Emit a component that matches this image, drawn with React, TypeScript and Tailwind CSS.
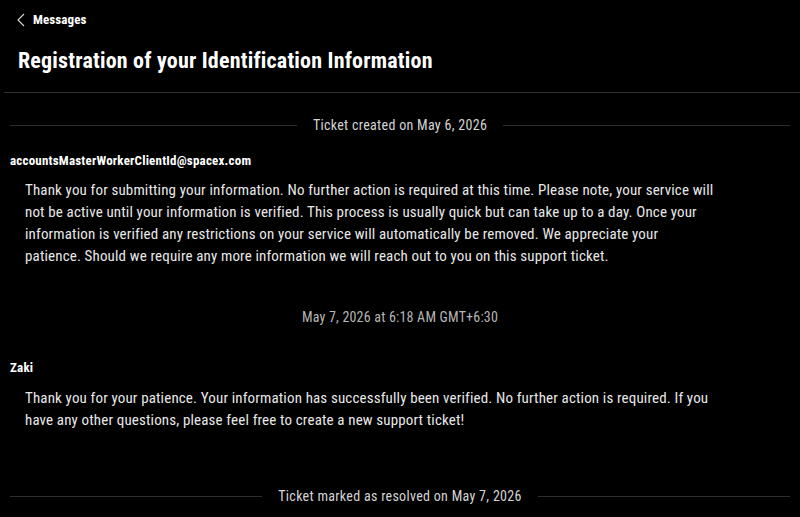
const Divider = ({ label }: { label: string }) => (
  <div className="flex items-center gap-4 px-[10px]">
    <div className="h-px flex-1 bg-[#2e2e2e]" />
    <span className="text-[14px] tracking-[0.3px] text-[#d4d4d4]">{label}</span>
    <div className="h-px flex-1 bg-[#2e2e2e]" />
  </div>
);

const Message = ({ sender, text }: { sender: string; text: string }) => (
  <div className="flex flex-col">
    <div className="px-[10px] text-[13px] font-bold tracking-[0.2px] text-white">{sender}</div>
    <p className="mt-[9px] max-w-[715px] pl-[25px] text-[15px] leading-[22px] tracking-[0.15px] text-[#e8e8e8]">
      {text}
    </p>
  </div>
);

const App = () => {
  return (
    <div
      className="min-h-[517px] w-full bg-black text-white"
      style={{ fontFamily: '"Liberation Sans Narrow", "Roboto Condensed", "Liberation Sans", sans-serif' }}
    >
      <div className="px-[18px] pt-[10px]">
        <div className="flex items-center gap-[8px]">
          <svg width="8" height="14" viewBox="0 0 8 14" fill="none" className="-ml-[1px]">
            <path d="M7 1L1 7l6 6" stroke="#d0d0d0" strokeWidth="1.2" />
          </svg>
          <span className="text-[13px] font-bold tracking-[0.1px]">Messages</span>
        </div>
        <h1 className="mt-[17px] text-[22px] font-bold leading-[28px] tracking-[0.2px]">
          Registration of your Identification Information
        </h1>
      </div>
      <div className="mt-[17px] ml-[4px] h-px bg-[#2e2e2e]" />

      <div className="mt-[22px]">
        <Divider label="Ticket created on May 6, 2026" />
      </div>

      <div className="mt-[15px]">
        <Message
          sender="accountsMasterWorkerClientId@spacex.com"
          text="Thank you for submitting your information. No further action is required at this time. Please note, your service will not be active until your information is verified. This process is usually quick but can take up to a day. Once your information is verified any restrictions on your service will automatically be removed. We appreciate your patience. Should we require any more information we will reach out to you on this support ticket."
        />
      </div>

      <div className="mt-[40px] text-center text-[14px] tracking-[0.2px] text-[#b5b5b5]">
        May 7, 2026 at 6:18 AM GMT+6:30
      </div>

      <div className="mt-[30px]">
        <Message
          sender="Zaki"
          text="Thank you for your patience. Your information has successfully been verified. No further action is required. If you have any other questions, please feel free to create a new support ticket!"
        />
      </div>

      <div className="mt-[55px] pb-[10px]">
        <Divider label="Ticket marked as resolved on May 7, 2026" />
      </div>
    </div>
  );
};

export default App;
